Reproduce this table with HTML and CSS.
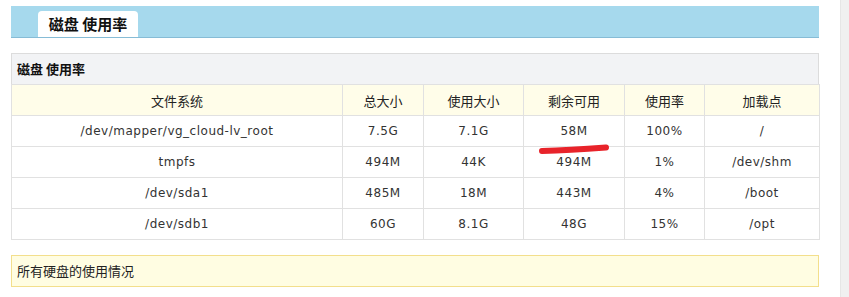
FILE: index.html
```html
<!DOCTYPE html>
<html>
<head>
<meta charset="utf-8">
<link rel="stylesheet" href="styles.css">
</head>
<body>
<div class="page">
  <div class="main">
    <div class="topbar">
      <div class="tab">磁盘 使用率</div>
    </div>
    <div class="panel">
      <div class="panel-title">磁盘 使用率</div>
      <div class="table-wrap">
        <table class="disk">
          <colgroup>
            <col class="c1"><col class="c2"><col class="c3"><col class="c4"><col class="c5"><col class="c6">
          </colgroup>
          <thead>
            <tr><th>文件系统</th><th>总大小</th><th>使用大小</th><th>剩余可用</th><th>使用率</th><th>加载点</th></tr>
          </thead>
          <tbody>
            <tr><td>/dev/mapper/vg_cloud-lv_root</td><td>7.5G</td><td>7.1G</td><td class="mark-cell">58M<svg class="mark" width="72" height="12" viewBox="0 0 72 12"><path d="M4 8 C 20 7.5, 40 6.5, 68 4.5" stroke="#e8232a" stroke-width="6" fill="none" stroke-linecap="round"/></svg></td><td>100%</td><td>/</td></tr>
            <tr><td>tmpfs</td><td>494M</td><td>44K</td><td>494M</td><td>1%</td><td>/dev/shm</td></tr>
            <tr><td>/dev/sda1</td><td>485M</td><td>18M</td><td>443M</td><td>4%</td><td>/boot</td></tr>
            <tr><td>/dev/sdb1</td><td>60G</td><td>8.1G</td><td>48G</td><td>15%</td><td>/opt</td></tr>
          </tbody>
        </table>
      </div>
    </div>
    <div class="note">所有硬盘的使用情况</div>
  </div>
  <div class="track"></div>
</div>
</body>
</html>
```
FILE: styles.css
```css
html, body {
  margin: 0;
  padding: 0;
  background: #fff;
}
body {
  font-family: "DejaVu Sans", Verdana, "Noto Sans CJK SC", sans-serif;
  color: #222;
}
.page {
  display: flex;
  height: 297px;
}
.main {
  width: 808px;
  margin: 6px 0 0 11px;
}
.track {
  margin-left: auto;
  width: 8px;
  background: #f0f0f0;
  border-left: 1px solid #e6e6e6;
}
.topbar {
  height: 31px;
  background: #a6d9ed;
  border-bottom: 1px solid #86bcd6;
  display: flex;
  align-items: flex-end;
}
.tab {
  margin-left: 27px;
  width: 100px;
  height: 26px;
  background: #fff;
  border-radius: 4px 4px 0 0;
  font-family: "Noto Sans CJK SC", sans-serif;
  font-weight: bold;
  font-size: 15px;
  line-height: 26px;
  text-align: center;
  color: #111;
}
.panel {
  margin-top: 15px;
}
.panel-title {
  height: 30px;
  line-height: 30px;
  background: #f2f3f5;
  border: 1px solid #dcdcdc;
  border-bottom: none;
  padding-left: 5px;
  font-family: "Noto Sans CJK SC", sans-serif;
  font-weight: bold;
  font-size: 13px;
  color: #111;
}
.disk {
  width: 808px;
  border-collapse: collapse;
  table-layout: fixed;
}
.c1 { width: 331px; }
.c2 { width: 81px; }
.c3 { width: 100px; }
.c4 { width: 101px; }
.c5 { width: 80px; }
.c6 { width: 115px; }
.disk th, .disk td {
  border: 1px solid #e1e1e1;
  height: 30px;
  padding: 0;
  text-align: center;
  font-size: 12px;
  color: #333;
}
.disk th {
  background: #fffde9;
  font-weight: normal;
  font-family: "Noto Sans CJK SC", sans-serif;
  font-size: 13px;
  color: #222;
}
.disk td {
  letter-spacing: 0.5px;
  font-family: "DejaVu Sans", Verdana, sans-serif;
  font-size: 12px;
}
.mark-cell {
  position: relative;
}
.mark {
  position: absolute;
  left: 14px;
  top: 27px;
}
.note {
  margin-top: 15px;
  height: 30px;
  line-height: 30px;
  background: #fffde2;
  border: 1px solid #f3df8c;
  padding-left: 5px;
  font-family: "Noto Sans CJK SC", sans-serif;
  font-size: 13px;
  color: #222;
}
```
